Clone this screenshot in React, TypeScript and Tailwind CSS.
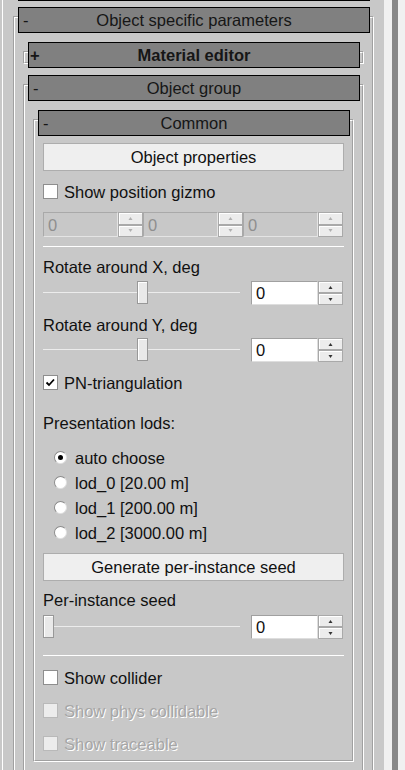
import React from "react";

const etchedOuter = "border border-t-[#a0a0a0] border-l-[#a0a0a0] border-r-white border-b-white";
const etchedInner = "border border-t-white border-l-white border-r-[#a0a0a0] border-b-[#a0a0a0]";

type GroupProps = {
  title: string;
  sign: string;
  bold?: boolean;
  collapsed?: boolean;
  className?: string;
  children?: React.ReactNode;
};

const Group = ({ title, sign, bold, collapsed, className, children }: GroupProps) => (
  <div className={`${etchedOuter} ${className ?? ""}`}>
    <div className={etchedInner}>
      <div
        className={`-mt-[11px] ml-[3px] mr-[2px] h-[26px] bg-[#808080] border border-black grid grid-cols-[22px_1fr_22px] items-center text-[#161616] ${
          collapsed ? "-mb-[6px]" : ""
        }`}
      >
        <span className={`${sign === "+" ? "pl-[1px] font-bold" : "pl-[4px]"}`}>{sign}</span>
        <span className={`text-center whitespace-nowrap ${bold ? "font-bold" : ""}`}>{title}</span>
        <span />
      </div>
      {children}
    </div>
  </div>
);

const Button = ({ label, className }: { label: string; className?: string }) => (
  <div
    className={`h-[28px] bg-[#efefef] border border-[#adadad] flex items-center justify-center whitespace-nowrap ${className ?? ""}`}
  >
    {label}
  </div>
);

const Checkbox = ({
  label,
  checked,
  disabled,
  className,
}: {
  label: string;
  checked?: boolean;
  disabled?: boolean;
  className?: string;
}) => (
  <div className={`flex items-center h-[15px] ${className ?? ""}`}>
    <span
      className={`w-[15px] h-[15px] shrink-0 border flex items-center justify-center ${
        disabled ? "bg-[#ececec] border-[#b9b9b9]" : "bg-white border-[#8e8e8e]"
      }`}
    >
      {checked && (
        <svg width="13" height="13" viewBox="0 0 13 13">
          <path d="M2.5 6.5 L5 9 L10 3.5" fill="none" stroke="#000" strokeWidth="1.8" />
        </svg>
      )}
    </span>
    <span
      className={`ml-[6px] whitespace-nowrap ${
        disabled ? "text-[#a6a6a6] [text-shadow:1px_1px_0_#ffffff]" : ""
      }`}
    >
      {label}
    </span>
  </div>
);

const Radio = ({ label, checked }: { label: string; checked?: boolean }) => (
  <div className="flex items-center h-[25px] pl-[11px]">
    <span className="w-[13px] h-[13px] shrink-0 rounded-full bg-white border border-[#8a8a8a] border-b-[#e0e0e0] border-r-[#e0e0e0] flex items-center justify-center">
      {checked && <span className="w-[5px] h-[5px] rounded-full bg-black" />}
    </span>
    <span className="ml-[8px] whitespace-nowrap">{label}</span>
  </div>
);

const SpinButtons = ({ disabled }: { disabled?: boolean }) => {
  const arrow = disabled ? "#b0b0b0" : "#333333";
  return (
    <div className="w-[25px] h-full flex flex-col shrink-0">
      <div className="flex-1 bg-[#ececec] border border-[#a9a9a9] shadow-[inset_1px_1px_0_#ffffff] flex items-center justify-center">
        <svg width="5" height="3" viewBox="0 0 5 3">
          <path d="M2.5 0 L4.5 3 L0.5 3 Z" fill={arrow} />
        </svg>
      </div>
      <div className="flex-1 bg-[#ececec] border border-[#a9a9a9] shadow-[inset_1px_1px_0_#ffffff] flex items-center justify-center">
        <svg width="5" height="3" viewBox="0 0 5 3">
          <path d="M0.5 0 L4.5 0 L2.5 3 Z" fill={arrow} />
        </svg>
      </div>
    </div>
  );
};

const Spin = ({ disabled, wide }: { disabled?: boolean; wide?: boolean }) => (
  <div className="flex h-full">
    <div
      className={`${wide ? "w-[75px]" : "w-[67px]"} h-full border flex items-center pl-[4px] ${
        disabled
          ? "bg-transparent border-[#a9a9a9] border-b-[#e4e4e4] border-r-[#e4e4e4] text-[#8f8f8f]"
          : "bg-white border-[#a0a0a0] border-b-[#dedede] border-r-[#dedede]"
      }`}
    >
      0
    </div>
    <SpinButtons disabled={disabled} />
  </div>
);

const SliderRow = ({ atStart, className }: { atStart?: boolean; className?: string }) => (
  <div className={`flex h-[24px] ${className ?? ""}`}>
    <div className="relative w-[197px] h-full">
      <div className="absolute left-0 right-0 top-[11px] h-px bg-[#ececec]" />
      <div
        className={`absolute top-0 w-[11px] h-[23px] bg-[#e9e9e9] border border-[#989898] shadow-[inset_1px_1px_0_#ffffff] ${
          atStart ? "left-0" : "left-[94px]"
        }`}
      />
    </div>
    <div className="ml-[11px] h-full">
      <Spin />
    </div>
  </div>
);

const App = () => {
  return (
    <div className="w-[405px] h-[770px] overflow-hidden bg-[#c8c8c8] flex font-['Liberation_Sans',Arial,sans-serif] text-[16.5px] leading-[18px] text-[#111111]">
      <div className="w-[384px] h-full">
        <div className="ml-[2px] h-full border-l border-white pl-[10px]">
          <div className="ml-[5px] w-[352px] h-px bg-black" />
          <Group className="mt-[15px] w-[361px]" sign="-" title="Object specific parameters">
            <div className="px-[8px] pb-[40px]">
              <Group className="mt-[18px]" sign="+" bold collapsed title="Material editor" />
              <Group className="mt-[20px]" sign="-" title="Object group">
                <div className="px-[8px] pb-[30px]">
                  <Group className="mt-[18px]" sign="-" title="Common">
                    <div className="px-[8px] pb-[9px]">
                      <Button className="mt-[7px]" label="Object properties" />
                      <Checkbox className="mt-[13px]" label="Show position gizmo" />
                      <div className="mt-[13px] h-[25px] flex">
                        <Spin disabled wide />
                        <Spin disabled wide />
                        <Spin disabled wide />
                      </div>
                      <div className="mt-[9px] h-px bg-white" />
                      <div className="mt-[11px] h-[18px] whitespace-nowrap">Rotate around X, deg</div>
                      <SliderRow className="mt-[5px]" />
                      <div className="mt-[11px] h-[18px] whitespace-nowrap">Rotate around Y, deg</div>
                      <SliderRow className="mt-[4px]" />
                      <Checkbox className="mt-[13px]" label="PN-triangulation" checked />
                      <div className="mt-[24px] h-[18px] whitespace-nowrap">Presentation lods:</div>
                      <div className="mt-[13px] flex flex-col">
                        <Radio label="auto choose" checked />
                        <Radio label="lod_0 [20.00 m]" />
                        <Radio label="lod_1 [200.00 m]" />
                        <Radio label="lod_2 [3000.00 m]" />
                      </div>
                      <Button className="mt-[8px]" label="Generate per-instance seed" />
                      <div className="mt-[10px] h-[18px] whitespace-nowrap">Per-instance seed</div>
                      <SliderRow className="mt-[6px]" atStart />
                      <div className="mt-[16px] h-px bg-white" />
                      <Checkbox className="mt-[14px]" label="Show collider" />
                      <Checkbox className="mt-[18px]" label="Show phys collidable" disabled />
                      <Checkbox className="mt-[18px]" label="Show traceable" disabled />
                    </div>
                  </Group>
                </div>
              </Group>
            </div>
          </Group>
        </div>
      </div>
      <div className="w-[8px] h-full bg-[#f0f0f0]" />
      <div className="w-[6px] h-full bg-[#878787]" />
      <div className="w-[7px] h-full bg-[#f0f0f0]" />
    </div>
  );
};

export default App;
